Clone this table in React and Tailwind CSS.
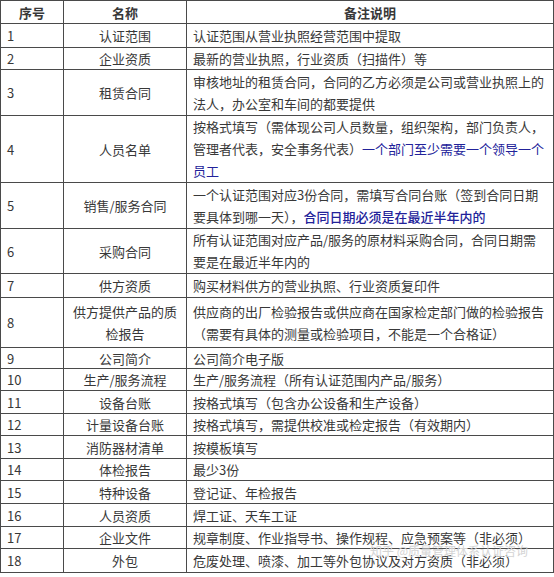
import React from 'react';

const rows = [
  { n: '1', name: '认证范围', h: 24, note: ['认证范围从营业执照经营范围中提取'] },
  { n: '2', name: '企业资质', h: 22, note: ['最新的营业执照，行业资质（扫描件）等'] },
  { n: '3', name: '租赁合同', h: 46, note: ['审核地址的租赁合同，合同的乙方必须是公司或营业执照上的', '法人，办公室和车间的都要提供'] },
  {
    n: '4', name: '人员名单', h: 67,
    note: [
      '按格式填写（需体现公司人员数量，组织架构，部门负责人，',
      <>管理者代表，安全事务代表）<span className="text-[#22229a]">一个部门至少需要一个领导一个</span></>,
      <span className="text-[#22229a]">员工</span>,
    ],
  },
  {
    n: '5', name: '销售/服务合同', h: 46,
    note: [
      '一个认证范围对应3份合同，需填写合同台账（签到合同日期',
      <>要具体到哪一天），<span className="text-[#22229a] font-medium">合同日期必须是在最近半年内的</span></>,
    ],
  },
  { n: '6', name: '采购合同', h: 45, note: ['所有认证范围对应产品/服务的原材料采购合同，合同日期需', '要是在最近半年内的'] },
  { n: '7', name: '供方资质', h: 24, note: ['购买材料供方的营业执照、行业资质复印件'] },
  {
    n: '8', name: ['供方提供产品的质', '检报告'], h: 50,
    note: ['供应商的出厂检验报告或供应商在国家检定部门做的检验报告', '（需要有具体的测量或检验项目，不能是一个合格证）'],
  },
  { n: '9', name: '公司简介', h: 21, note: ['公司简介电子版'] },
  { n: '10', name: '生产/服务流程', h: 22, note: ['生产/服务流程（所有认证范围内产品/服务）'] },
  { n: '11', name: '设备台账', h: 23, note: ['按格式填写（包含办公设备和生产设备）'] },
  { n: '12', name: '计量设备台账', h: 22, note: ['按格式填写，需提供校准或检定报告（有效期内）'] },
  { n: '13', name: '消防器材清单', h: 23, note: ['按模板填写'] },
  { n: '14', name: '体检报告', h: 22, note: ['最少3份'] },
  { n: '15', name: '特种设备', h: 23, note: ['登记证、年检报告'] },
  { n: '16', name: '人员资质', h: 23, note: ['焊工证、天车工证'] },
  { n: '17', name: '企业文件', h: 22, note: ['规章制度、作业指导书、操作规程、应急预案等（非必须）'] },
  { n: '18', name: '外包', h: 24, note: ['危废处理、喷漆、加工等外包协议及对方资质（非必须）'] },
];

const lines = (v) => {
  const list = Array.isArray(v) ? v : [v];
  return list.map((l, i) => (
    <div key={i} className={list.length > 1 ? 'leading-[22px] whitespace-nowrap' : 'leading-[19px] whitespace-nowrap'}>{l}</div>
  ));
};

export default function App() {
  return (
    <div
      className="relative w-[554px] h-[577px] bg-white text-[13px] text-[#383838]"
      style={{ fontFamily: '"Noto Sans CJK SC", "Noto Sans", sans-serif' }}
    >
      <table className="table-fixed border-collapse w-[553px]">
        <colgroup>
          <col className="w-[63px]" />
          <col className="w-[123px]" />
          <col className="w-[367px]" />
        </colgroup>
        <thead>
          <tr className="h-[23px]">
            <th className="border border-[#4a4a4a] font-bold text-center p-0 leading-[19px]">序号</th>
            <th className="border border-[#4a4a4a] font-bold text-center p-0 leading-[19px]">名称</th>
            <th className="border border-[#4a4a4a] font-bold text-center p-0 leading-[19px]">备注说明</th>
          </tr>
        </thead>
        <tbody>
          {rows.map((r) => (
            <tr key={r.n} style={{ height: r.h }}>
              <td className="border border-[#4a4a4a] p-0 pl-[6px] align-middle leading-[19px]">{r.n}</td>
              <td className="border border-[#4a4a4a] p-0 text-center align-middle">{lines(r.name)}</td>
              <td className="border border-[#4a4a4a] p-0 pl-[6px] align-middle">{lines(r.note)}</td>
            </tr>
          ))}
        </tbody>
      </table>
      <div className="absolute left-[370px] top-[542px] text-[12px] text-[#d4d4d4] whitespace-nowrap pointer-events-none">
        知乎 @质量管理体系认证咨询
      </div>
    </div>
  );
}
